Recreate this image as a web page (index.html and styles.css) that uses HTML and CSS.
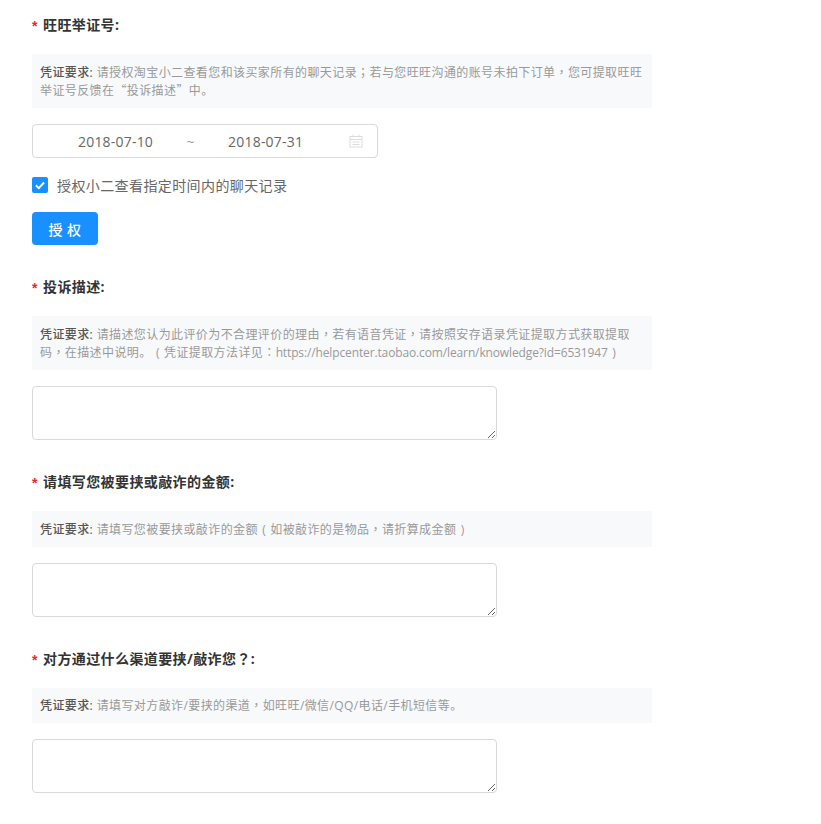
FILE: index.html
```html
<!DOCTYPE html>
<html lang="zh-CN">
<head>
    <meta charset="UTF-8">
    <meta name="viewport" content="width=device-width, initial-scale=1.0">
    <title>投诉凭证</title>
    <link rel="stylesheet" href="styles.css">
</head>
<body>
    <form class="container">
        <div class="field">
            <label class="field-label"><span class="required">*</span>旺旺举证号:</label>
            <div class="note"><span class="note-title">凭证要求:</span> 请授权淘宝小二查看您和该买家所有的聊天记录<span class="punct">；</span>若与您旺旺沟通的账号未拍下订单<span class="punct">，</span>您可提取旺旺举证号反馈在<span class="punct">“</span>投诉描述<span class="punct">”</span>中。</div>
            <div class="date-range">
                <span class="date-value">2018-07-10</span>
                <span class="date-sep">~</span>
                <span class="date-value">2018-07-31</span>
                <svg class="date-icon" width="14" height="14" viewBox="0 0 14 14" fill="none" stroke="#dcdcdc" stroke-width="1">
                    <rect x="1" y="2.5" width="12" height="10.5"/>
                    <path d="M1 5.5h12M4 .5v3M10 .5v3M3.5 8h7M3.5 10.5h7"/>
                </svg>
            </div>
            <div class="check-row">
                <span class="check-box">
                    <svg width="16" height="16" viewBox="0 0 16 16" fill="none" stroke="#fff" stroke-width="2">
                        <path d="M3.8 8.2l3 2.9 5.2-5.6"/>
                    </svg>
                </span>
                <span class="check-text">授权小二查看指定时间内的聊天记录</span>
            </div>
            <button type="button" class="btn-primary">授 权</button>
        </div>
        <div class="field">
            <label class="field-label"><span class="required">*</span>投诉描述:</label>
            <div class="note"><span class="note-title">凭证要求:</span> 请描述您认为此评价为不合理评价的理由<span class="punct">，</span>若有语音凭证<span class="punct">，</span>请按照安存语录凭证提取方式获取提取码<span class="punct">，</span>在描述中说明。<span class="paren">(</span>凭证提取方法详见<span class="punct">：</span><span class="url">https://helpcenter.taobao.com/learn/knowledge?id=6531947</span><span class="paren">)</span></div>
            <textarea class="text-box"></textarea>
        </div>
        <div class="field">
            <label class="field-label"><span class="required">*</span>请填写您被要挟或敲诈的金额:</label>
            <div class="note"><span class="note-title">凭证要求:</span> 请填写您被要挟或敲诈的金额<span class="paren">(</span>如被敲诈的是物品<span class="punct">，</span>请折算成金额<span class="paren">)</span></div>
            <textarea class="text-box"></textarea>
        </div>
        <div class="field">
            <label class="field-label"><span class="required">*</span>对方通过什么渠道要挟/敲诈您<span class="punct">？</span>:</label>
            <div class="note"><span class="note-title">凭证要求:</span> 请填写对方敲诈/要挟的渠道<span class="punct">，</span>如旺旺/微信/QQ/电话/手机短信等。</div>
            <textarea class="text-box"></textarea>
        </div>
    </form>
</body>
</html>
```

FILE: styles.css
```css
body {
    margin: 0;
    background: #fff;
    font-family: "Open Sans", "Noto Sans CJK SC", sans-serif;
    letter-spacing: 0.4px;
    color: #333;
}

.container {
    width: 620px;
    padding: 15px 0 0 32px;
}

.field {
    margin-bottom: 32px;
}

.field-label {
    display: block;
    height: 20px;
    line-height: 20px;
    font-size: 14px;
    font-weight: 700;
    color: #333;
}

.required {
    display: inline-block;
    width: 11px;
    color: #f5222d;
    font-family: "Liberation Sans", sans-serif;
    vertical-align: -1px;
}

/* centred punctuation, as the original font draws it */
.punct {
    font-family: "Noto Sans CJK TC", sans-serif;
    font-feature-settings: "locl" 0;
    line-height: 0;
}

.paren {
    display: inline-block;
    width: 12.4px;
    text-align: center;
    letter-spacing: 0;
    line-height: 0;
}

.note {
    margin: 19px 0 16px;
    padding: 9.5px 8px 7.5px;
    background: #f8f9fb;
    font-size: 12px;
    line-height: 18.5px;
    color: #999;
}

.note-title {
    font-weight: 500;
    color: #555;
}

.url {
    letter-spacing: -0.13px;
}

.date-range {
    display: flex;
    align-items: center;
    box-sizing: border-box;
    width: 346px;
    height: 34px;
    padding: 0 14px 0 45px;
    border: 1px solid #d9d9d9;
    border-radius: 4px;
    font-size: 14px;
    letter-spacing: 0.2px;
    color: #666;
}

.date-sep {
    width: 75px;
    text-align: center;
    color: #999;
}

.date-icon {
    margin-left: auto;
}

.check-row {
    display: flex;
    align-items: center;
    gap: 9px;
    margin-top: 19px;
    height: 16px;
}

.check-box {
    width: 16px;
    height: 16px;
    border-radius: 2px;
    background: #1890ff;
}

.check-box svg {
    display: block;
}

.check-text {
    font-size: 14px;
    color: #666;
}

.btn-primary {
    display: block;
    width: 66px;
    height: 33px;
    margin-top: 19px;
    padding: 0;
    border: none;
    border-radius: 4px;
    background: #1890ff;
    color: #fff;
    font-family: inherit;
    font-size: 14px;
    font-weight: 500;
    letter-spacing: inherit;
}

.text-box {
    display: block;
    box-sizing: border-box;
    width: 465px;
    height: 54px;
    border: 1px solid #d9d9d9;
    border-radius: 4px;
    outline: none;
}
```
